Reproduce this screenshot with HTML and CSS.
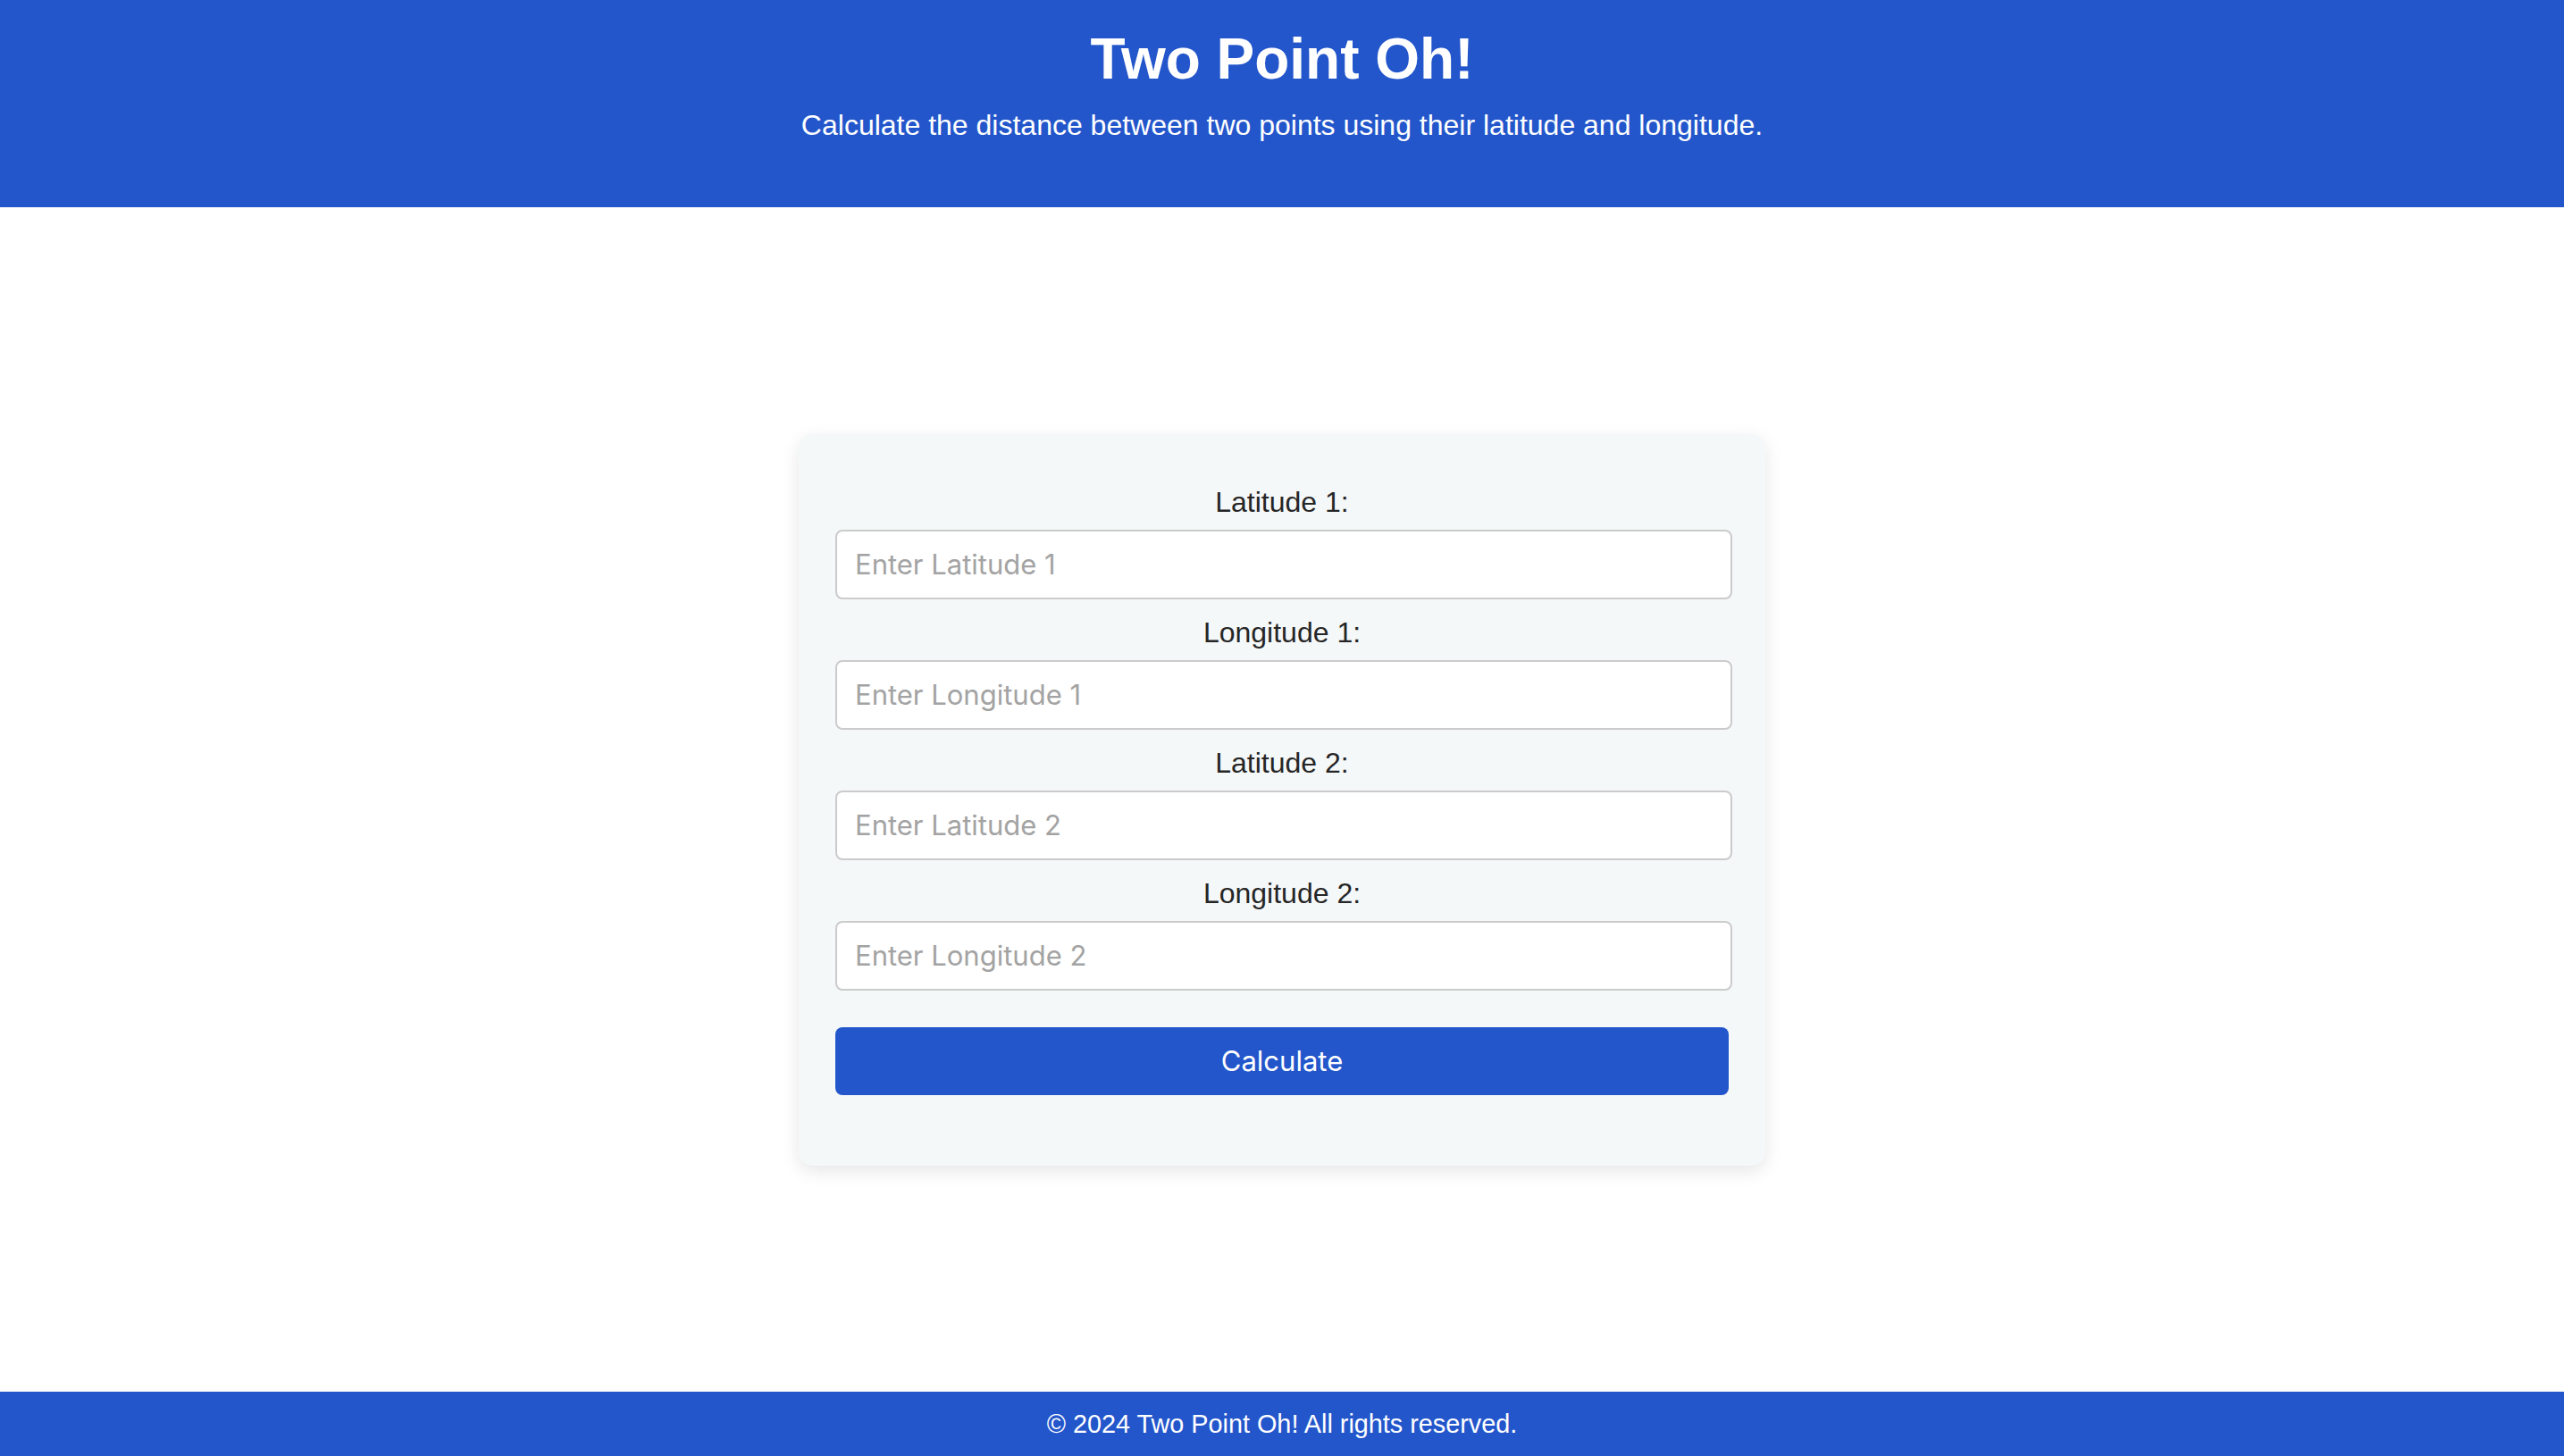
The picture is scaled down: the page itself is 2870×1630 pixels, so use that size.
FILE: index.html
```html
<!DOCTYPE html>
<html lang="en">
<head>
<meta charset="utf-8">
<title>Two Point Oh!</title>
<link rel="stylesheet" href="styles.css">
</head>
<body>
<header class="site-header">
  <h1 class="site-title">Two Point Oh!</h1>
  <p class="site-subtitle">Calculate the distance between two points using their latitude and longitude.</p>
</header>
<main class="main">
  <form class="card">
    <div class="field">
      <label class="field-label" for="lat1">Latitude 1:</label>
      <input class="field-input" id="lat1" type="text" placeholder="Enter Latitude 1">
    </div>
    <div class="field">
      <label class="field-label" for="lon1">Longitude 1:</label>
      <input class="field-input" id="lon1" type="text" placeholder="Enter Longitude 1">
    </div>
    <div class="field">
      <label class="field-label" for="lat2">Latitude 2:</label>
      <input class="field-input" id="lat2" type="text" placeholder="Enter Latitude 2">
    </div>
    <div class="field">
      <label class="field-label" for="lon2">Longitude 2:</label>
      <input class="field-input" id="lon2" type="text" placeholder="Enter Longitude 2">
    </div>
    <button class="calc-button" type="button">Calculate</button>
  </form>
</main>
<footer class="site-footer">© 2024 Two Point Oh! All rights reserved.</footer>
</body>
</html>
```

FILE: styles.css
```css
html, body {
  margin: 0;
  padding: 0;
}

body {
  font-family: "Liberation Sans", Arial, sans-serif;
  background: #ffffff;
  color: #262626;
  min-height: 100vh;
  display: flex;
  flex-direction: column;
}

.site-header {
  background: #2356cb;
  color: #ffffff;
  text-align: center;
  padding: 29px 0 73px;
}

.site-title {
  margin: 0;
  font-size: 64px;
  line-height: 74px;
  font-weight: bold;
}

.site-subtitle {
  margin: 19px 0 0;
  font-size: 32px;
  line-height: 37px;
}

.main {
  flex: 1;
  display: flex;
  align-items: center;
  justify-content: center;
}

.card {
  width: 1000px;
  padding: 58px 41px 79px;
  background: #f5f8f9;
  border-radius: 16px;
  box-shadow: 0 6px 20px rgba(0, 0, 0, 0.1);
  display: flex;
  flex-direction: column;
}

.field {
  display: flex;
  flex-direction: column;
  margin-bottom: 19px;
}

.field-label {
  display: block;
  text-align: center;
  font-size: 32px;
  line-height: 37px;
  color: #262626;
  margin-bottom: 12px;
}

.field-input {
  box-sizing: border-box;
  width: 1004px;
  height: 78px;
  margin: 0;
  padding: 0 20px;
  border: 2px solid #cbcbcb;
  border-radius: 8px;
  background: #ffffff;
  font-family: Inter, "Liberation Sans", sans-serif;
  font-size: 31px;
  color: #262626;
  outline: none;
}

.field-input::placeholder {
  color: #a3a3a3;
}

.calc-button {
  margin-top: 22px;
  width: 1000px;
  height: 76px;
  border: none;
  border-radius: 8px;
  background: #2356cb;
  color: #ffffff;
  font-family: Inter, "Liberation Sans", sans-serif;
  font-size: 31px;
  cursor: pointer;
}

.site-footer {
  background: #2356cb;
  color: #ffffff;
  text-align: center;
  height: 72px;
  line-height: 72px;
  font-size: 28.8px;
}
```
